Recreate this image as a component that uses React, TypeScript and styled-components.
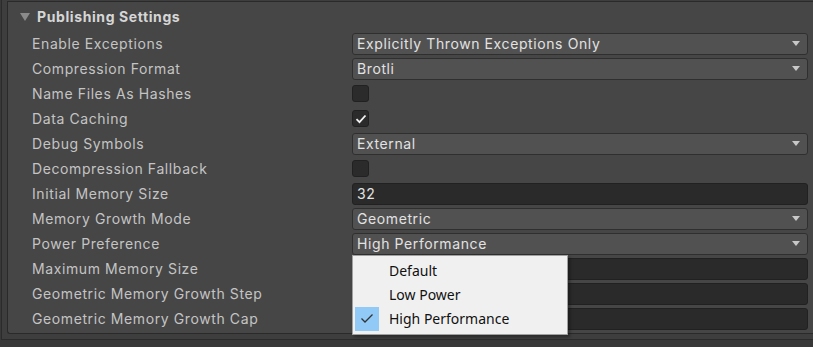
import React from "react";
import styled, { createGlobalStyle } from "styled-components";

const GlobalStyle = createGlobalStyle`
  html, body {
    margin: 0;
    padding: 0;
    background: #383838;
    overflow: hidden;
  }
  * {
    box-sizing: border-box;
  }
`;

const Outer = styled.div`
  width: 813px;
  height: 347px;
  background: #383838;
  font-family: Inter, "Noto Sans", sans-serif;
`;

const Frame = styled.div`
  margin-left: 1px;
  background: #3e3e3e;
  border-left: 1px solid #2b2b2b;
  border-bottom: 1px solid #2b2b2b;
  padding: 1px 0 5px 5px;
`;

const Panel = styled.section`
  position: relative;
  background: #464646;
  border-top: 1px solid #2a2a2a;
  border-left: 1px solid #2a2a2a;
  border-bottom: 1px solid #2a2a2a;
  border-bottom-left-radius: 3px;
  padding-bottom: 2px;
`;

const Header = styled.div`
  height: 29px;
  display: flex;
  align-items: center;
  gap: 7px;
  padding-left: 12px;
  color: #d6d6d6;
  font-size: 14px;
  font-weight: 700;
  letter-spacing: 0.6px;
`;

const Triangle = styled.span`
  width: 0;
  height: 0;
  border-left: 5px solid transparent;
  border-right: 5px solid transparent;
  border-top: 8px solid #8a8a8a;
`;

const Row = styled.div`
  display: grid;
  grid-template-columns: 320px 1fr;
  align-items: center;
  height: 25px;
  padding: 0 5px 0 24px;
`;

const Label = styled.span`
  color: #c4c4c4;
  font-size: 14px;
  letter-spacing: 0.6px;
  white-space: nowrap;
`;

const Dropdown = styled.div`
  position: relative;
  height: 22px;
  display: flex;
  align-items: center;
  justify-content: space-between;
  padding: 0 7px 0 4px;
  background: #515151;
  border: 1px solid #2f2f2f;
  border-radius: 3px;
  color: #e2e2e2;
  font-size: 14px;
  letter-spacing: 0.6px;
`;

const Arrow = styled.span`
  width: 0;
  height: 0;
  border-left: 4.5px solid transparent;
  border-right: 4.5px solid transparent;
  border-top: 5px solid #c8c8c8;
`;

const TextField = styled.div`
  height: 22px;
  display: flex;
  align-items: center;
  padding: 0 4px;
  background: #2a2a2a;
  border: 1px solid #212121;
  border-radius: 3px;
  color: #e2e2e2;
  font-size: 14px;
  letter-spacing: 0.6px;
`;

const Check = styled.div`
  width: 17px;
  height: 17px;
  display: flex;
  align-items: center;
  justify-content: center;
  background: #2b2b2b;
  border: 1px solid #212121;
  border-radius: 3px;
`;

const Menu = styled.div`
  position: absolute;
  top: 21px;
  left: -1px;
  width: 216px;
  padding: 3px 2px;
  background: #f0f0f0;
  border: 1px solid #a0a0a0;
  box-shadow: 2px 2px 3px rgba(0, 0, 0, 0.35);
  z-index: 5;
  font-family: "Noto Sans", "Open Sans", sans-serif;
  letter-spacing: 0;
`;

const MenuItem = styled.div`
  height: 24px;
  display: flex;
  align-items: center;
  color: #111;
  font-size: 14px;
`;

const Gutter = styled.div<{ $on?: boolean }>`
  width: 24px;
  height: 24px;
  margin-right: 10px;
  display: flex;
  align-items: center;
  justify-content: center;
  background: ${(p) => (p.$on ? "#91c9f7" : "transparent")};
`;

const WhiteTick = () => (
  <svg width="12" height="10" viewBox="0 0 12 10">
    <path d="M1.5 5.2 L4.5 8.2 L10.5 1.5" fill="none" stroke="#f2f2f2" strokeWidth="1.8" />
  </svg>
);

const DarkTick = () => (
  <svg width="14" height="11" viewBox="0 0 14 11">
    <path d="M1.5 5.5 L5 9 L12.5 1.5" fill="none" stroke="#333" strokeWidth="1.3" />
  </svg>
);

type Field =
  | { kind: "drop"; value: string; menu?: boolean }
  | { kind: "check"; on: boolean }
  | { kind: "text"; value: string };

const rows: { label: string; field: Field }[] = [
  { label: "Enable Exceptions", field: { kind: "drop", value: "Explicitly Thrown Exceptions Only" } },
  { label: "Compression Format", field: { kind: "drop", value: "Brotli" } },
  { label: "Name Files As Hashes", field: { kind: "check", on: false } },
  { label: "Data Caching", field: { kind: "check", on: true } },
  { label: "Debug Symbols", field: { kind: "drop", value: "External" } },
  { label: "Decompression Fallback", field: { kind: "check", on: false } },
  { label: "Initial Memory Size", field: { kind: "text", value: "32" } },
  { label: "Memory Growth Mode", field: { kind: "drop", value: "Geometric" } },
  { label: "Power Preference", field: { kind: "drop", value: "High Performance", menu: true } },
  { label: "Maximum Memory Size", field: { kind: "text", value: "" } },
  { label: "Geometric Memory Growth Step", field: { kind: "text", value: "" } },
  { label: "Geometric Memory Growth Cap", field: { kind: "text", value: "" } },
];

const options = ["Default", "Low Power", "High Performance"];

function renderField(field: Field) {
  if (field.kind === "check") {
    return <Check>{field.on && <WhiteTick />}</Check>;
  }
  if (field.kind === "text") {
    return <TextField>{field.value}</TextField>;
  }
  return (
    <Dropdown>
      <span>{field.value}</span>
      <Arrow />
      {field.menu && (
        <Menu>
          {options.map((o) => (
            <MenuItem key={o}>
              <Gutter $on={o === field.value}>{o === field.value && <DarkTick />}</Gutter>
              {o}
            </MenuItem>
          ))}
        </Menu>
      )}
    </Dropdown>
  );
}

export default function App() {
  return (
    <>
      <GlobalStyle />
      <Outer>
        <Frame>
          <Panel>
            <Header>
              <Triangle />
              Publishing Settings
            </Header>
            {rows.map(({ label, field }) => (
              <Row key={label}>
                <Label>{label}</Label>
                <div>{renderField(field)}</div>
              </Row>
            ))}
          </Panel>
        </Frame>
      </Outer>
    </>
  );
}
